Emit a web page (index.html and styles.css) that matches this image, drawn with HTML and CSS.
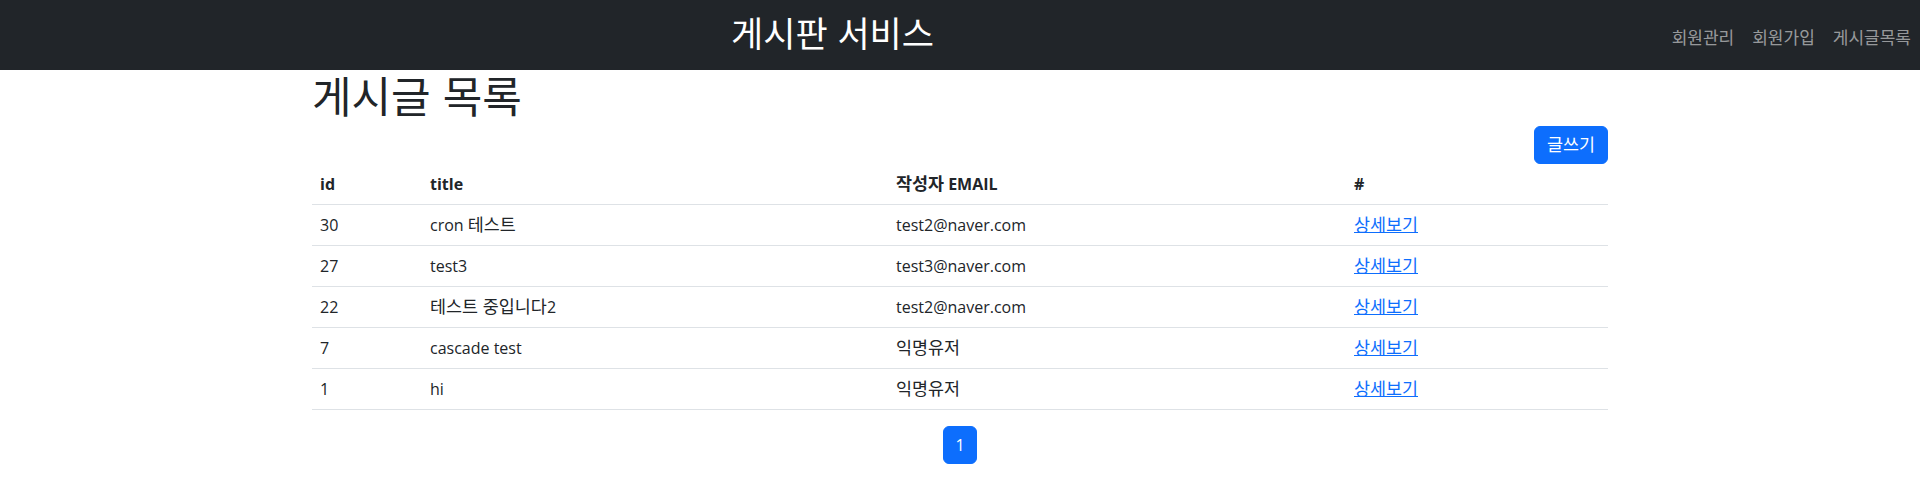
FILE: index.html
```html
<!DOCTYPE html>
<html lang="ko">
<head>
<meta charset="utf-8">
<title>게시글 목록</title>
<link rel="stylesheet" href="styles.css">
</head>
<body>
<nav class="navbar">
  <div class="brand">게시판 서비스</div>
  <ul class="nav-links">
    <li><a href="#" class="nav-link">회원관리</a></li>
    <li><a href="#" class="nav-link">회원가입</a></li>
    <li><a href="#" class="nav-link">게시글목록</a></li>
  </ul>
</nav>
<main class="container">
  <h1 class="page-title">게시글 목록</h1>
  <div class="actions"><a href="#" class="btn-primary"><span class="ko">글쓰기</span></a></div>
  <table class="table">
    <thead>
      <tr><th>id</th><th>title</th><th><span class="ko">작성자</span> EMAIL</th><th>#</th></tr>
    </thead>
    <tbody>
      <tr><td>30</td><td>cron <span class="ko">테스트</span></td><td>test2@naver.com</td><td><a href="#" class="link"><span class="ko">상세보기</span></a></td></tr>
      <tr><td>27</td><td>test3</td><td>test3@naver.com</td><td><a href="#" class="link"><span class="ko">상세보기</span></a></td></tr>
      <tr><td>22</td><td><span class="ko">테스트 중입니다</span>2</td><td>test2@naver.com</td><td><a href="#" class="link"><span class="ko">상세보기</span></a></td></tr>
      <tr><td>7</td><td>cascade test</td><td><span class="ko">익명유저</span></td><td><a href="#" class="link"><span class="ko">상세보기</span></a></td></tr>
      <tr><td>1</td><td>hi</td><td><span class="ko">익명유저</span></td><td><a href="#" class="link"><span class="ko">상세보기</span></a></td></tr>
    </tbody>
  </table>
  <nav class="pager">
    <span class="page-active">1</span>
  </nav>
</main>
</body>
</html>
```
FILE: styles.css
```css
* { box-sizing: border-box; }
html, body {
  margin: 0;
  padding: 0;
  background: #fff;
}
body {
  font-family: "Open Sans", "Noto Sans CJK KR", sans-serif;
  font-size: 16px;
  line-height: 24px;
  color: #212529;
}
.ko {
  font-family: "Noto Sans CJK KR", sans-serif;
  font-size: 17.4px;
  line-height: 1;
}
.navbar {
  display: flex;
  align-items: center;
  height: 70px;
  background: #212529;
  padding-left: 731px;
}
.brand {
  color: #fff;
  font-family: "Noto Sans CJK KR", sans-serif;
  font-size: 35px;
  line-height: 46px;
  margin-top: -6px;
}
.nav-links {
  display: flex;
  list-style: none;
  margin: 0 0 0 auto;
  padding: 0;
  padding-top: 4px;
}
.nav-link {
  display: block;
  padding: 0 9px;
  color: rgba(255, 255, 255, 0.55);
  text-decoration: none;
  font-family: "Noto Sans CJK KR", sans-serif;
  font-size: 17px;
  line-height: 24px;
}
.container {
  max-width: 1296px;
  margin: 0 auto;
}
.page-title {
  margin: 0;
  font-family: "Noto Sans CJK KR", sans-serif;
  font-size: 43px;
  line-height: 48px;
  font-weight: 400;
  color: #212529;
}
.actions {
  display: flex;
  justify-content: flex-end;
  margin-top: 8px;
}
.btn-primary {
  display: inline-block;
  height: 38px;
  padding: 6px 12px;
  border: 1px solid #0d6efd;
  border-radius: 6px;
  background: #0d6efd;
  color: #fff;
  text-decoration: none;
  font-size: 16px;
  line-height: 24px;
}
.table {
  width: 100%;
  border-collapse: collapse;
  margin-bottom: 16px;
}
.table th, .table td {
  padding: 8px;
  text-align: left;
  vertical-align: top;
  border-bottom: 1px solid #dee2e6;
}
.table th { font-weight: 700; }
.table th:nth-child(1) { width: 110px; }
.table th:nth-child(2) { width: 466px; }
.table th:nth-child(3) { width: 458px; }
.link {
  color: #0d6efd;
  text-decoration: underline;
}
.pager {
  display: flex;
  justify-content: center;
}
.page-active {
  display: block;
  padding: 6px 11px;
  border: 1px solid #0d6efd;
  border-radius: 6px;
  background: #0d6efd;
  color: #fff;
  font-size: 16px;
  line-height: 24px;
}
```
